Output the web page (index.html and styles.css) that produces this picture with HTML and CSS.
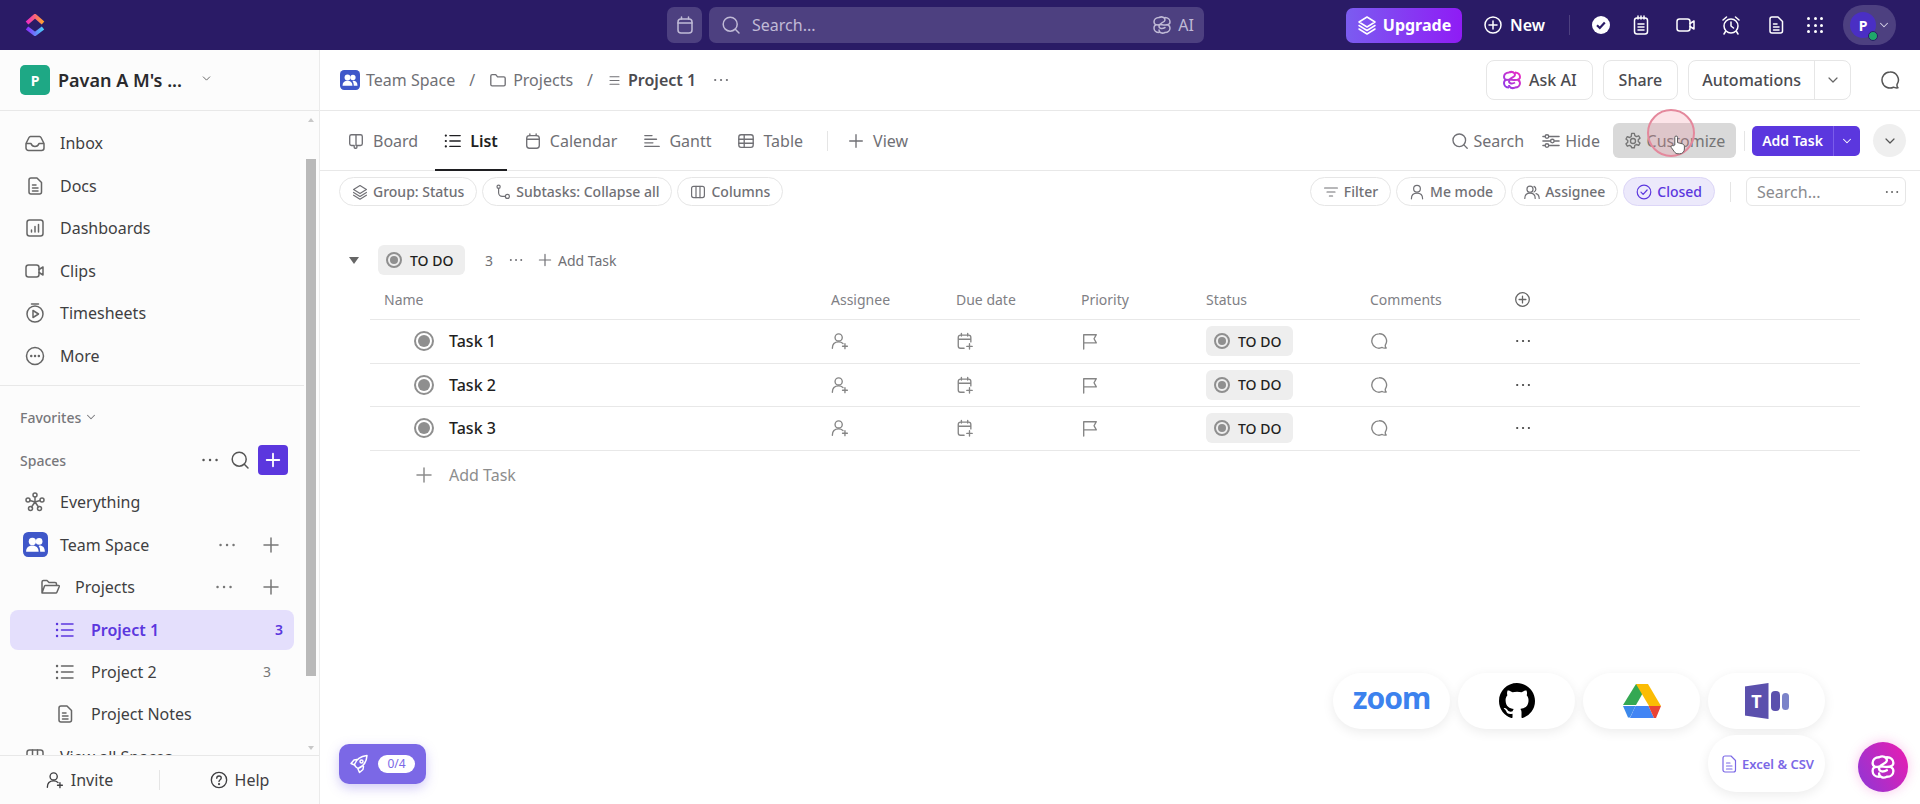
FILE: index.html
```html
<!DOCTYPE html>
<html lang="en">
<head>
  <meta charset="UTF-8" />
  <title>Project 1 – List</title>
  <link rel="stylesheet" href="styles.css">
</head>
<body>
  <svg class="sprite" aria-hidden="true">
    <defs>
      <linearGradient id="logoTop" x1="0" x2="1" y1="0" y2="0"><stop offset="0" stop-color="#f02bc0"/><stop offset="1" stop-color="#ffa12f"/></linearGradient>
      <linearGradient id="logoBottom" x1="0" x2="1" y1="0" y2="0"><stop offset="0" stop-color="#8930fd"/><stop offset="1" stop-color="#49ccf9"/></linearGradient>
      <linearGradient id="aiPink" x1="0" x2="1" y1="1" y2="0"><stop offset="0" stop-color="#8b3be8"/><stop offset="1" stop-color="#f02bc0"/></linearGradient>
    </defs>
    <symbol id="i-search" viewBox="0 0 20 20"><circle cx="9.2" cy="9.2" r="7"/><path d="M14.3 14.3l3.7 3.7"/></symbol>
    <symbol id="i-cal" viewBox="0 0 20 20"><rect x="3" y="4" width="14" height="14" rx="3"/><path d="M3 8h14M6.500 2v2M13.500 2v2"/></symbol>
    <symbol id="i-ai" viewBox="0 0 20 20"><path d="M7 2.500c3-1.500 6 0 6 2.500s-6 3-6 6 3.500 3 6 1.500M13 17.500c-3 1.500-6 0-6-2.500M13 2.500c3 0 5 2 5 4.500s-2 3-5 3-5.500-1-7 0M7 17.500c-3 0-5-2-5-4.500s1.500-3.500 4-3M7 2.500c-3 0-5 2-5 4.500 0 1.500 1 2.500 2 3M13 17.500c3 0 5-2 5-4.500 0-1.500-1-2.500-2-3"/></symbol>
    <symbol id="i-plus" viewBox="0 0 20 20"><path d="M10 3v14M3 10h14"/></symbol>
    <symbol id="i-plus-circle" viewBox="0 0 20 20"><circle cx="10" cy="10" r="8"/><path d="M10 6v8M6 10h8"/></symbol>
    <symbol id="i-chev" viewBox="0 0 20 20"><path d="M5 7.500l5 5 5-5"/></symbol>
    <symbol id="i-inbox" viewBox="0 0 20 20"><path d="M1 10.500V15a2.500 2.500 0 0 0 2.500 2.500h13A2.500 2.500 0 0 0 19 15v-4.500L16 4.500A2 2 0 0 0 14.500 3.500h-9A2 2 0 0 0 4 4.500zM1 10.500h5c.8 2.500 2 3 4 3s3.200-.5 4-3h5"/></symbol>
    <symbol id="i-doc" viewBox="0 0 20 20"><path d="M4 4a2 2 0 0 1 2-2h6l4.500 4.500V16a2 2 0 0 1-2 2H6a2 2 0 0 1-2-2zM7.500 9H11M7.500 12h5.500M7.500 15h5.500"/></symbol>
    <symbol id="i-dash" viewBox="0 0 20 20"><rect x="2" y="2" width="16" height="16" rx="2.500"/><path d="M6.500 14v-2M10 14V8.500M13.500 14V6.500"/></symbol>
    <symbol id="i-video" viewBox="0 0 20 20"><rect x="1" y="4" width="13" height="12" rx="2.500"/><path d="M14 8.500l4-2.500v8l-4-2.500"/></symbol>
    <symbol id="i-timer" viewBox="0 0 20 20"><circle cx="10" cy="11" r="8"/><path d="M6.500 1h7M8 7.500v7l5.500-3.500z"/></symbol>
    <symbol id="i-more" viewBox="0 0 20 20"><circle cx="10" cy="10" r="8.500"/><path class="dots" d="M6.200 10h.1M10 10h.1M13.800 10h.1"/></symbol>
    <symbol id="i-hub" viewBox="0 0 20 20"><circle cx="10" cy="3" r="2"/><circle cx="3" cy="8" r="2"/><circle cx="17" cy="8" r="2"/><circle cx="5.500" cy="16.500" r="2"/><circle cx="14.500" cy="16.500" r="2"/><path d="M10 5v5M5 8.500l5 1.500 5-1.500M6.500 15l3.500-5 3.500 5"/></symbol>
    <symbol id="i-folder-open" viewBox="0 0 20 20"><path d="M2 16V5a1.500 1.500 0 0 1 1.500-1.500h3.500l2 2h6a1.500 1.500 0 0 1 1.500 1.500v1.500M2 16l2.500-7a1 1 0 0 1 1-.5H18.500a.8.8 0 0 1 .8 1L17 15a1.500 1.500 0 0 1-1.500 1z"/></symbol>
    <symbol id="i-folder" viewBox="0 0 20 20"><path d="M2 5.500A1.500 1.500 0 0 1 3.500 4h4l2 2.500h7A1.500 1.500 0 0 1 18 8v7a1.500 1.500 0 0 1-1.500 1.500h-13A1.500 1.500 0 0 1 2 15z"/></symbol>
    <symbol id="i-list" viewBox="0 0 20 20"><path d="M6.500 4H18M6.500 10H18M6.500 16H18"/><path class="dots" d="M2 4h.1M2 10h.1M2 16h.1"/></symbol>
    <symbol id="i-lines" viewBox="0 0 20 20"><path d="M4 5h12M4 10h12M4 15h12"/></symbol>
    <symbol id="i-user-plus" viewBox="0 0 20 20"><circle cx="8.500" cy="6" r="4"/><path d="M1.500 18c0-4 2.500-7 7-7 2 0 3.500.6 4.800 1.800M15.500 13v5.500M12.800 15.800h5.400"/></symbol>
    <symbol id="i-help" viewBox="0 0 20 20"><circle cx="10" cy="10" r="8.500"/><path d="M7.500 8c0-1.500 1.200-2.500 2.500-2.500s2.500 1 2.500 2.300c0 2-2.500 2-2.500 4"/><path class="dots" d="M10 14.500h.1"/></symbol>
    <symbol id="i-dots" viewBox="0 0 20 20"><path class="dots" d="M3.500 10h.1M10 10h.1M16.500 10h.1"/></symbol>
    <symbol id="i-board" viewBox="0 0 20 20"><path d="M3 5a2 2 0 0 1 2-2h10a2 2 0 0 1 2 2v8a2 2 0 0 1-2 2h-4v2a1 1 0 0 1-1 1H9a1 1 0 0 1-1-1v-2H5 M3 5v8a2 2 0 0 0 2 2M10 3v12"/></symbol>
    <symbol id="i-gantt" viewBox="0 0 20 20"><path d="M2 4h8M2 8h13M2 12h9M2 16h16"/></symbol>
    <symbol id="i-table" viewBox="0 0 20 20"><rect x="2" y="3" width="16" height="14" rx="2.500"/><path d="M2 8h16M2 12.500h16M8 3v14"/></symbol>
    <symbol id="i-layers" viewBox="0 0 20 20"><path d="M10 2l8 5-8 5-8-5zM2 10.500l8 5 8-5M2 14l8 5 8-5"/></symbol>
    <symbol id="i-subtask" viewBox="0 0 20 20"><circle cx="4.500" cy="3.500" r="2"/><circle cx="15.500" cy="15.500" r="2.500"/><path d="M4.500 5.500V11a4.500 4.500 0 0 0 4.500 4.500h4"/></symbol>
    <symbol id="i-columns" viewBox="0 0 20 20"><rect x="2" y="3" width="16" height="14" rx="2.500"/><path d="M7.500 3v14M12.500 3v14"/></symbol>
    <symbol id="i-sliders" viewBox="0 0 20 20"><path d="M8 5h11M1 5h2M14 10h5M1 10h8M8 15h11M1 15h2"/><circle cx="5.500" cy="5" r="2"/><circle cx="11.500" cy="10" r="2"/><circle cx="5.500" cy="15" r="2"/></symbol>
    <symbol id="i-gear" viewBox="0 0 20 20"><circle cx="10" cy="10" r="2.800"/><path d="M8.500 1.500h3l.5 2.600 1.800 1 2.500-.9 1.500 2.600-2 1.700v2l2 1.700-1.500 2.600-2.500-.9-1.800 1-.5 2.600h-3L8 15.900l-1.800-1-2.500.9-1.500-2.600 2-1.700v-2l-2-1.700 1.500-2.600 2.500.9 1.800-1z"/></symbol>
    <symbol id="i-filter" viewBox="0 0 20 20"><path d="M2 5h16M5 10h10M8 15h4"/></symbol>
    <symbol id="i-user" viewBox="0 0 20 20"><circle cx="10" cy="6" r="4.200"/><path d="M3 18.500c0-4.500 3-7 7-7s7 2.500 7 7"/></symbol>
    <symbol id="i-users" viewBox="0 0 20 20"><circle cx="7.500" cy="6.500" r="3.800"/><path d="M1 18c0-4 2.500-6.500 6.500-6.500S14 14 14 18M12.500 3a3.800 3.800 0 0 1 0 7M15 12c2.500.7 4 3 4 6"/></symbol>
    <symbol id="i-check-circle" viewBox="0 0 20 20"><circle cx="10" cy="10" r="8.500"/><path d="M6.200 10.200l2.700 2.700 5-5.400"/></symbol>
    <symbol id="i-comment" viewBox="0 0 20 20"><path d="M10 2a8 8 0 1 0 3.500 15.200c1 .6 2.800.8 4.500.6-.8-.9-1.200-2-1-3.300A8 8 0 0 0 10 2z"/></symbol>
    <symbol id="i-cal-plus" viewBox="0 0 20 20"><path d="M9 18H5a2.500 2.500 0 0 1-2.500-2.500V6A2.500 2.500 0 0 1 5 3.500h9A2.500 2.500 0 0 1 16.500 6v5M2.500 8h14M6 1.500v3M13 1.500v3M15 13v6M12 16h6"/></symbol>
    <symbol id="i-flag" viewBox="0 0 20 20"><path d="M3 19V3h14l-2.500 4.500L17 12H3"/></symbol>
    <symbol id="i-clipboard" viewBox="0 0 20 20"><rect x="3.500" y="3" width="13" height="16" rx="2.500"/><path d="M7 1v3M10 1v3M13 1v3M7 9h6M7 12h6M7 15h6"/></symbol>
    <symbol id="i-alarm" viewBox="0 0 20 20"><circle cx="10" cy="11" r="7"/><path d="M10 7v4l2.500 2M2 5l3.500-3M18 5l-3.500-3M4.500 16.500L3 19M15.500 16.500L17 19"/></symbol>
    <symbol id="i-rocket" viewBox="0 0 20 20"><path d="M7 13l-1.500-2c1-4 4-8.500 12.500-9.500-.5 8-5 11.500-9 13zM5.500 11L2 9.500l3-3.500 3-.5M9 15l1.500 3.500 3.500-3 .5-3"/><circle cx="12.500" cy="7.500" r="1.500"/></symbol>
  </svg>

  <header class="topbar">
    <svg class="logo" viewBox="0 0 20 22">
      <path d="M2 9l8-7 8 7" fill="none" stroke="url(#logoTop)" stroke-width="4" />
      <path d="M2 14l8 6 8-6" fill="none" stroke="url(#logoBottom)" stroke-width="4" />
    </svg>
    <div class="top-center">
      <div class="top-cal"><svg class="ico"><use href="#i-cal"/></svg></div>
      <div class="top-search">
        <svg class="ico"><use href="#i-search"/></svg>
        <span class="top-search-text">Search...</span>
        <svg class="ico"><use href="#i-ai"/></svg>
        <span>AI</span>
      </div>
    </div>
    <div class="top-right">
      <button class="upgrade"><svg class="ico"><use href="#i-layers"/></svg>Upgrade</button>
      <div class="top-new"><svg class="ico"><use href="#i-plus-circle"/></svg>New</div>
      <span class="top-div"></span>
      <svg class="check-fill" viewBox="0 0 20 20"><circle cx="10" cy="10" r="9" fill="#fff"/><path d="M6 10.300l2.800 2.700 5-5.500" fill="none" stroke="#2a1b66" stroke-width="2.200"/></svg>
      <svg class="ico top-ico"><use href="#i-clipboard"/></svg>
      <svg class="ico top-ico"><use href="#i-video"/></svg>
      <svg class="ico top-ico"><use href="#i-alarm"/></svg>
      <svg class="ico top-ico"><use href="#i-doc"/></svg>
      <div class="apps"><i></i><i></i><i></i><i></i><i></i><i></i><i></i><i></i><i></i></div>
      <div class="me">
        <span class="avatar">P<i class="online"></i></span>
        <svg class="ico"><use href="#i-chev"/></svg>
      </div>
    </div>
  </header>

  <div class="app">
    <aside class="sidebar">
      <div class="workspace">
        <span class="ws-badge">P</span>
        <span class="ws-name">Pavan A M's ...</span>
        <svg class="ico ws-chev"><use href="#i-chev"/></svg>
      </div>

      <div class="side-scroll">
        <nav class="side-nav">
          <a class="side-row"><svg class="ico"><use href="#i-inbox"/></svg>Inbox</a>
          <a class="side-row"><svg class="ico"><use href="#i-doc"/></svg>Docs</a>
          <a class="side-row"><svg class="ico"><use href="#i-dash"/></svg>Dashboards</a>
          <a class="side-row"><svg class="ico"><use href="#i-video"/></svg>Clips</a>
          <a class="side-row"><svg class="ico"><use href="#i-timer"/></svg>Timesheets</a>
          <a class="side-row"><svg class="ico"><use href="#i-more"/></svg>More</a>
        </nav>

        <div class="side-label fav">Favorites <svg class="ico"><use href="#i-chev"/></svg></div>
        <div class="side-label spaces">
          <span class="grow">Spaces</span>
          <svg class="ico act"><use href="#i-dots"/></svg>
          <svg class="ico act"><use href="#i-search"/></svg>
          <span class="add-space"><svg class="ico"><use href="#i-plus"/></svg></span>
        </div>

        <a class="side-row"><svg class="ico"><use href="#i-hub"/></svg>Everything</a>
        <a class="side-row team">
          <svg class="team-ico" viewBox="0 0 24 24"><use href="#team-glyph"/><rect width="24" height="24" rx="5" fill="#3f57c9"/><circle cx="9" cy="9" r="3.500" fill="#fff"/><circle cx="15.500" cy="9" r="3.200" fill="#fff"/><path d="M3 19c0-4 2.500-6 6-6s6 2 6 6zM16 13c3 0 5 2 5 6h-4.500c0-2.500-.5-4.500-1.500-5.500z" fill="#fff"/></svg>
          <span class="grow">Team Space</span>
          <svg class="ico act"><use href="#i-dots"/></svg>
          <svg class="ico act"><use href="#i-plus"/></svg>
        </a>
        <a class="side-row folder">
          <svg class="ico"><use href="#i-folder-open"/></svg>
          <span class="grow">Projects</span>
          <svg class="ico act"><use href="#i-dots"/></svg>
          <svg class="ico act"><use href="#i-plus"/></svg>
        </a>
        <a class="side-row sub current">
          <svg class="ico"><use href="#i-list"/></svg>
          <span class="grow">Project 1</span>
          <span class="count">3</span>
        </a>
        <a class="side-row sub">
          <svg class="ico"><use href="#i-list"/></svg>
          <span class="grow">Project 2</span>
          <span class="count">3</span>
        </a>
        <a class="side-row sub"><svg class="ico"><use href="#i-doc"/></svg>Project Notes</a>
        <a class="side-row"><svg class="ico"><use href="#i-columns"/></svg>View all Spaces</a>

        <span class="scroll-up"></span>
        <span class="scroll-thumb"></span>
        <span class="scroll-down"></span>
      </div>

      <div class="side-foot">
        <a class="foot-btn"><svg class="ico"><use href="#i-user-plus"/></svg>Invite</a>
        <span class="foot-div"></span>
        <a class="foot-btn"><svg class="ico"><use href="#i-help"/></svg>Help</a>
      </div>
    </aside>

    <main class="content">
      <div class="crumbs">
        <svg class="crumb-team" viewBox="0 0 24 24"><rect width="24" height="24" rx="5" fill="#3f57c9"/><circle cx="9" cy="9" r="3.500" fill="#fff"/><circle cx="15.500" cy="9" r="3.200" fill="#fff"/><path d="M3 19c0-4 2.500-6 6-6s6 2 6 6zM16 13c3 0 5 2 5 6h-4.500c0-2.500-.5-4.500-1.500-5.500z" fill="#fff"/></svg>
        <span>Team Space</span>
        <span class="slash">/</span>
        <svg class="ico"><use href="#i-folder"/></svg>
        <span>Projects</span>
        <span class="slash">/</span>
        <svg class="ico small"><use href="#i-lines"/></svg>
        <strong>Project 1</strong>
        <svg class="ico crumb-dots"><use href="#i-dots"/></svg>
        <div class="crumb-actions">
          <button class="outline"><svg class="ai-color" viewBox="0 0 20 20"><use href="#i-ai"/></svg>Ask AI</button>
          <button class="outline">Share</button>
          <div class="outline auto"><span>Automations</span><span class="auto-chev"><svg class="ico"><use href="#i-chev"/></svg></span></div>
          <svg class="ico chat"><use href="#i-comment"/></svg>
        </div>
      </div>

      <div class="tabs">
        <a class="tab"><svg class="ico"><use href="#i-board"/></svg>Board</a>
        <a class="tab active"><svg class="ico"><use href="#i-list"/></svg>List</a>
        <a class="tab"><svg class="ico"><use href="#i-cal"/></svg>Calendar</a>
        <a class="tab"><svg class="ico"><use href="#i-gantt"/></svg>Gantt</a>
        <a class="tab"><svg class="ico"><use href="#i-table"/></svg>Table</a>
        <span class="tab-div"></span>
        <a class="tab"><svg class="ico"><use href="#i-plus"/></svg>View</a>
        <div class="tab-tools">
          <a class="tool"><svg class="ico"><use href="#i-search"/></svg>Search</a>
          <a class="tool"><svg class="ico"><use href="#i-sliders"/></svg>Hide</a>
          <a class="tool hover"><svg class="ico"><use href="#i-gear"/></svg>Customize</a>
          <span class="tool-div"></span>
          <div class="add-task"><span>Add Task</span><span class="add-chev"><svg class="ico"><use href="#i-chev"/></svg></span></div>
          <span class="round-chev"><svg class="ico"><use href="#i-chev"/></svg></span>
        </div>
      </div>

      <div class="filters">
        <a class="pill"><svg class="ico"><use href="#i-layers"/></svg>Group: Status</a>
        <a class="pill"><svg class="ico"><use href="#i-subtask"/></svg>Subtasks: Collapse all</a>
        <a class="pill"><svg class="ico"><use href="#i-columns"/></svg>Columns</a>
        <div class="filter-right">
          <a class="pill"><svg class="ico"><use href="#i-filter"/></svg>Filter</a>
          <a class="pill"><svg class="ico"><use href="#i-user"/></svg>Me mode</a>
          <a class="pill"><svg class="ico"><use href="#i-users"/></svg>Assignee</a>
          <a class="pill closed"><svg class="ico"><use href="#i-check-circle"/></svg>Closed</a>
          <span class="filter-div"></span>
          <div class="mini-search"><span>Search...</span><svg class="ico"><use href="#i-dots"/></svg></div>
        </div>
      </div>

      <section class="group">
        <div class="group-head">
          <span class="caret"></span>
          <span class="status-chip"><i class="status-dot small"></i>TO DO</span>
          <span class="group-count">3</span>
          <svg class="ico"><use href="#i-dots"/></svg>
          <span class="group-add"><svg class="ico"><use href="#i-plus"/></svg>Add Task</span>
        </div>

        <div class="task-grid task-header">
          <span class="col-name">Name</span>
          <span>Assignee</span>
          <span>Due date</span>
          <span>Priority</span>
          <span>Status</span>
          <span>Comments</span>
          <svg class="ico"><use href="#i-plus-circle"/></svg>
        </div>

        <div class="task-grid task-row">
          <span class="task-name"><i class="status-dot"></i>Task 1</span>
          <svg class="ico"><use href="#i-user-plus"/></svg>
          <svg class="ico"><use href="#i-cal-plus"/></svg>
          <svg class="ico"><use href="#i-flag"/></svg>
          <span class="status-chip"><i class="status-dot small"></i>TO DO</span>
          <svg class="ico"><use href="#i-comment"/></svg>
          <svg class="ico row-more"><use href="#i-dots"/></svg>
        </div>
        <div class="task-grid task-row">
          <span class="task-name"><i class="status-dot"></i>Task 2</span>
          <svg class="ico"><use href="#i-user-plus"/></svg>
          <svg class="ico"><use href="#i-cal-plus"/></svg>
          <svg class="ico"><use href="#i-flag"/></svg>
          <span class="status-chip"><i class="status-dot small"></i>TO DO</span>
          <svg class="ico"><use href="#i-comment"/></svg>
          <svg class="ico row-more"><use href="#i-dots"/></svg>
        </div>
        <div class="task-grid task-row">
          <span class="task-name"><i class="status-dot"></i>Task 3</span>
          <svg class="ico"><use href="#i-user-plus"/></svg>
          <svg class="ico"><use href="#i-cal-plus"/></svg>
          <svg class="ico"><use href="#i-flag"/></svg>
          <span class="status-chip"><i class="status-dot small"></i>TO DO</span>
          <svg class="ico"><use href="#i-comment"/></svg>
          <svg class="ico row-more"><use href="#i-dots"/></svg>
        </div>

        <div class="add-row"><svg class="ico"><use href="#i-plus"/></svg>Add Task</div>
      </section>
    </main>
  </div>

  <!-- things floating over the page -->
  <div class="click-ring"></div>
  <svg class="hand" viewBox="0 0 20 26"><path d="M6 13V3.500a1.700 1.700 0 0 1 3.400 0V10l6 1.500c1.500.4 2.600 1.500 2.600 3.500v3c0 3-2 6-6 6H10c-2 0-3.500-1-4.500-2.500L1.500 16c-.8-1.500 1-3 2.500-2z" fill="#fff" stroke="#555" stroke-width="1.200"/></svg>

  <div class="onboard">
    <svg class="ico"><use href="#i-rocket"/></svg>
    <span class="onboard-count">0/4</span>
  </div>

  <div class="integrations">
    <div class="int-card"><span class="zoom-word">zoom</span></div>
    <div class="int-card">
      <svg class="gh" viewBox="0 0 16 16"><path d="M8 0C3.580 0 0 3.580 0 8c0 3.540 2.290 6.530 5.470 7.590.4.070.55-.17.55-.38 0-.19-.01-.82-.01-1.490-2.010.37-2.530-.49-2.690-.94-.09-.23-.48-.94-.82-1.130-.28-.15-.68-.52-.01-.53.63-.01 1.080.58 1.230.82.72 1.210 1.870.87 2.330.66.07-.52.28-.87.51-1.070-1.780-.2-3.640-.89-3.640-3.950 0-.87.31-1.590.82-2.150-.08-.2-.36-1.020.08-2.120 0 0 .67-.21 2.200.82.64-.18 1.320-.27 2-.27s1.360.09 2 .27c1.530-1.040 2.200-.82 2.200-.82.44 1.100.16 1.920.08 2.120.51.56.82 1.270.82 2.150 0 3.070-1.870 3.750-3.650 3.950.29.25.54.73.54 1.480 0 1.070-.01 1.930-.01 2.200 0 .21.15.46.55.38A8.013 8.013 0 0 0 16 8c0-4.420-3.580-8-8-8z"/></svg>
    </div>
    <div class="int-card">
      <svg class="drive" viewBox="0 0 38 34">
        <path d="M13 0h12L13 21H0z" fill="#34a853" transform="translate(0 0)"/>
        <path d="M13 0h12l13 22H26z" fill="#fbbc04"/>
        <path d="M0 22h12.500L7 33.500H5z" fill="#1a73e8" opacity=".85"/>
        <path d="M12.500 22h13L31 34H7z" fill="#4285f4"/>
        <path d="M25.500 22H38l-5 12h-2z" fill="#ea4335"/>
      </svg>
    </div>
    <div class="int-card">
      <div class="teams">
        <span class="teams-door">T</span>
        <span class="teams-head big"></span>
        <span class="teams-head"></span>
      </div>
    </div>
    <div class="int-card excel">
      <svg class="ico"><use href="#i-doc"/></svg>Excel &amp; CSV
    </div>
  </div>

  <div class="ai-fab">
    <svg class="ico"><use href="#i-ai"/></svg>
  </div>
</body>
</html>
```

FILE: styles.css
```css
* {
  box-sizing: border-box;
}

html, body {
  height: 100%;
}

body {
  margin: 0;
  font-family: "Noto Sans", "Open Sans", sans-serif;
  font-size: 16px;
  color: #3f3f42;
  background: #fff;
  overflow: hidden;
  display: flex;
  flex-direction: column;
}

a {
  color: inherit;
}

button {
  font: inherit;
  color: inherit;
  background: none;
  border: none;
  padding: 0;
}

.sprite {
  position: absolute;
  width: 0;
  height: 0;
}

.ico {
  width: 20px;
  height: 20px;
  flex: none;
  fill: none;
  stroke: currentColor;
  stroke-width: 1.5;
  stroke-linecap: round;
  stroke-linejoin: round;
}

.dots {
  stroke-width: 2.4;
}

.grow {
  flex: 1;
}

/* top bar */
.topbar {
  height: 50px;
  flex: none;
  background: #2a1b66;
  color: #fff;
  display: flex;
  align-items: center;
  position: relative;
}

.logo {
  width: 20px;
  height: 22px;
  margin-left: 25px;
}

.top-center {
  margin-left: 622px;
  display: flex;
  gap: 7px;
}

.top-cal, .top-search {
  height: 36px;
  background: #4d4080;
  border-radius: 7px;
  color: #c0bad6;
  display: flex;
  align-items: center;
}

.top-cal {
  width: 35px;
  justify-content: center;
}

.top-search {
  width: 495px;
  padding: 0 10px 0 12px;
  gap: 6px;
}

.top-search-text {
  flex: 1;
  margin-left: 5px;
}

.top-right {
  margin-left: 142px;
  flex: 1;
  display: flex;
  align-items: center;
}

.upgrade {
  width: 116px;
  height: 35px;
  border-radius: 7px;
  background: linear-gradient(90deg, #7b5cf0, #8f1cf5);
  color: #fff;
  font-weight: 700;
  display: flex;
  align-items: center;
  justify-content: center;
  gap: 6px;
}

.top-new {
  margin-left: 21px;
  font-weight: 600;
  display: flex;
  align-items: center;
  gap: 7px;
}

.top-div {
  width: 1px;
  height: 20px;
  background: #4d4080;
  margin: 0 21px 0 24px;
}

.check-fill {
  width: 20px;
  height: 20px;
  margin-right: 20px;
}

.top-ico {
  margin-right: 25px;
}

.apps {
  width: 16px;
  display: grid;
  grid-template-columns: repeat(3, 3px);
  gap: 3.500px;
  margin-left: -4px;
}

.apps i {
  height: 3px;
  background: #fff;
  border-radius: 50%;
}

.me {
  margin-left: 20px;
  width: 53px;
  height: 40px;
  border-radius: 20px;
  background: #4d4080;
  display: flex;
  align-items: center;
  padding-left: 7px;
  color: #d8d4e8;
}

.me .ico {
  width: 14px;
  height: 14px;
  margin-left: 1px;
}

.avatar {
  width: 26px;
  height: 26px;
  border-radius: 50%;
  background: #4a2fc4;
  color: #fff;
  font-size: 14px;
  font-weight: 700;
  display: flex;
  align-items: center;
  justify-content: center;
  position: relative;
}

.online {
  position: absolute;
  right: -2px;
  bottom: -3px;
  width: 10px;
  height: 10px;
  border-radius: 50%;
  background: #1fa86a;
  border: 1.500px solid #2a1b66;
}

.app {
  flex: 1;
  min-height: 0;
  display: flex;
}

/* sidebar */
.sidebar {
  width: 320px;
  flex: none;
  background: #fcfcfc;
  border-right: 1px solid #ebebeb;
  display: flex;
  flex-direction: column;
}

.workspace {
  height: 61px;
  flex: none;
  border-bottom: 1px solid #e8e8e8;
  padding-left: 20px;
  display: flex;
  align-items: center;
}

.ws-badge {
  width: 30px;
  height: 30px;
  border-radius: 5px;
  background: #1ea885;
  color: #fff;
  font-size: 14px;
  font-weight: 700;
  display: flex;
  align-items: center;
  justify-content: center;
}

.ws-name {
  margin-left: 8px;
  font-size: 18px;
  font-weight: 600;
  color: #2a2a2d;
}

.ws-chev {
  width: 13px;
  height: 13px;
  margin-left: 18px;
  margin-top: -3px;
  color: #666;
}

.side-scroll {
  flex: 1;
  min-height: 0;
  overflow: hidden;
  position: relative;
  padding-top: 11px;
}

.side-nav {
  border-bottom: 1px solid #e8e8e8;
  margin-right: 15px;
  padding-bottom: 8px;
}

.side-row {
  height: 42.500px;
  display: flex;
  align-items: center;
  gap: 15px;
  padding-left: 25px;
  padding-right: 38px;
  color: #3f3f42;
}

.side-row .ico {
  color: #666;
}

.side-label {
  font-size: 14px;
  font-weight: 500;
  color: #77777b;
  display: flex;
  align-items: center;
  padding-left: 20px;
}

.side-label .ico {
  width: 14px;
  height: 14px;
}

.fav {
  height: 20px;
  margin-top: 21px;
  gap: 3px;
}

.spaces {
  height: 30px;
  margin-top: 18px;
  margin-bottom: 6px;
  padding-right: 31px;
}

.side-label .act {
  width: 20px;
  height: 20px;
  margin-right: 8px;
  color: #555;
}

.spaces .ico.act:first-of-type {
  margin-right: 10px;
}

.add-space {
  width: 30px;
  height: 30px;
  border-radius: 4px;
  background: #5b37de;
  color: #fff;
  display: flex;
  align-items: center;
  justify-content: center;
}

.add-space .ico {
  width: 18px;
  height: 18px;
  stroke-width: 2;
}

.team {
  padding-left: 23px;
  gap: 12px;
}

.team-ico {
  width: 25px;
  height: 25px;
  flex: none;
}

.side-row .act {
  margin-left: 12px;
  color: #777;
}

.folder {
  padding-left: 40px;
}

.sub {
  padding-left: 55px;
  gap: 16px;
}

.current {
  height: 40px;
  margin: 1px 25px 1px 10px;
  padding-left: 45px;
  padding-right: 11px;
  background: #e4dffc;
  border-radius: 8px;
  color: #5b37de;
  font-weight: 600;
}

.current .ico {
  color: #5b37de;
}

.count {
  font-size: 14px;
  color: #777;
}

.current .count {
  color: #5b37de;
}

.sub:not(.current) {
  padding-right: 48px;
}

.scroll-thumb {
  position: absolute;
  left: 306px;
  top: 48px;
  width: 10px;
  height: 517px;
  background: #b9b9b9;
}

.scroll-up, .scroll-down {
  position: absolute;
  left: 308px;
  width: 0;
  height: 0;
  border-left: 3px solid transparent;
  border-right: 3px solid transparent;
}

.scroll-up {
  top: 7px;
  border-bottom: 4px solid #c8c8c8;
}

.scroll-down {
  bottom: 5px;
  border-top: 4px solid #c8c8c8;
}

.side-foot {
  height: 49px;
  flex: none;
  border-top: 1px solid #e8e8e8;
  background: #fcfcfc;
  display: flex;
  align-items: center;
  position: relative;
}

.foot-btn {
  flex: 1;
  display: flex;
  align-items: center;
  justify-content: center;
  gap: 7px;
}

.foot-btn .ico {
  width: 18px;
  height: 18px;
}

.foot-div {
  width: 1px;
  height: 20px;
  background: #e5e5e5;
}

/* main column */
.content {
  flex: 1;
  min-width: 0;
  position: relative;
}

.crumbs {
  height: 61px;
  border-bottom: 1px solid #e8e8e8;
  padding: 0 20px 0 20px;
  display: flex;
  align-items: center;
  gap: 6px;
  color: #707075;
}

.crumb-team {
  width: 20px;
  height: 20px;
}

.crumbs strong {
  font-weight: 600;
  color: #4b4b50;
}

.crumbs .ico {
  width: 18px;
  height: 18px;
}

.crumbs .small {
  width: 15px;
  height: 15px;
}

.slash {
  margin: 0 8px;
}

.crumb-dots {
  margin-left: 10px;
}

.crumb-actions {
  margin-left: auto;
  display: flex;
  align-items: center;
  gap: 10px;
}

.outline {
  height: 40px;
  border: 1px solid #e6e6e6;
  border-radius: 8px;
  background: #fff;
  color: #4b4b50;
  font-weight: 500;
  display: flex;
  align-items: center;
  justify-content: center;
  padding: 0 15px;
}

.ai-color {
  width: 20px;
  height: 20px;
  fill: none;
  stroke: url(#aiPink);
  stroke-width: 2;
  margin-right: 7px;
}

.auto {
  padding: 0;
}

.auto > span:first-child {
  padding: 0 13px;
}

.auto-chev {
  width: 36px;
  height: 100%;
  border-left: 1px solid #e6e6e6;
  display: flex;
  align-items: center;
  justify-content: center;
  color: #666;
}

.auto-chev .ico {
  width: 16px;
  height: 16px;
}

.crumbs .chat {
  margin-left: 19px;
  width: 20px;
  height: 20px;
  color: #555;
}

.tabs {
  height: 60px;
  border-bottom: 1px solid #e8e8e8;
  padding-left: 18px;
  display: flex;
  align-items: center;
  color: #707075;
}

.tab {
  height: 100%;
  display: flex;
  align-items: center;
  gap: 8px;
  padding: 0 9px;
  margin-right: 8px;
  position: relative;
}

.tab .ico {
  width: 18px;
  height: 18px;
}

.tab.active {
  color: #1f1f22;
  font-weight: 600;
}

.tab.active::after {
  content: "";
  position: absolute;
  left: 0;
  right: 0;
  bottom: -1px;
  height: 2px;
  background: #1f1f22;
}

.tab-div {
  width: 1px;
  height: 20px;
  background: #e5e5e5;
  margin: 0 10px 0 7px;
}

.tab-tools {
  margin-left: auto;
  padding-right: 14px;
  display: flex;
  align-items: center;
}

.tool {
  display: flex;
  align-items: center;
  gap: 5px;
  margin-right: 18px;
}

.tool .ico {
  width: 18px;
  height: 18px;
}

.tool.hover {
  width: 123px;
  height: 35px;
  margin-right: 8px;
  margin-left: -5px;
  justify-content: center;
  border-radius: 6px;
  background: #d9d9d9;
  color: #757575;
}

.tool-div {
  width: 1px;
  height: 20px;
  background: #e5e5e5;
  margin-right: 7px;
}

.add-task {
  width: 108px;
  height: 30px;
  border-radius: 5px;
  background: #5b37de;
  color: #fff;
  font-size: 14px;
  font-weight: 600;
  display: flex;
  align-items: center;
}

.add-task > span:first-child {
  width: 81px;
  text-align: center;
}

.add-chev {
  flex: 1;
  height: 100%;
  border-left: 1px solid #7a5cea;
  display: flex;
  align-items: center;
  justify-content: center;
}

.add-chev .ico {
  width: 14px;
  height: 14px;
}

.round-chev {
  width: 33px;
  height: 33px;
  margin-left: 13px;
  border-radius: 50%;
  background: #efefef;
  color: #555;
  display: flex;
  align-items: center;
  justify-content: center;
}

.round-chev .ico {
  width: 16px;
  height: 16px;
}

.filters {
  height: 50px;
  padding: 0 14px 9px 19px;
  display: flex;
  align-items: center;
  gap: 5px;
}

.pill {
  height: 29px;
  padding: 0 12px;
  border: 1px solid #e6e6e6;
  border-radius: 15px;
  background: #fff;
  color: #707075;
  font-size: 14px;
  font-weight: 500;
  display: flex;
  align-items: center;
  gap: 5px;
}

.pill .ico {
  width: 16px;
  height: 16px;
}

.filter-right {
  margin-left: auto;
  display: flex;
  align-items: center;
  gap: 5px;
}

.closed {
  background: #ece9fb;
  border-color: #dcd6f7;
  color: #5b37de;
}

.filter-div {
  width: 1px;
  height: 20px;
  background: #e5e5e5;
  margin: 0 10px;
}

.mini-search {
  width: 160px;
  height: 29px;
  border: 1px solid #e6e6e6;
  border-radius: 6px;
  padding: 0 5px 0 10px;
  color: #8a8a8e;
  display: flex;
  align-items: center;
  justify-content: space-between;
}

.mini-search .ico {
  width: 16px;
  height: 16px;
  color: #666;
}

/* task table */
.group {
  padding: 24px 60px 0 50px;
}

.group-head {
  height: 30px;
  display: flex;
  align-items: center;
  color: #707075;
  font-size: 14px;
}

.caret {
  width: 0;
  height: 0;
  border-left: 5.500px solid transparent;
  border-right: 5.500px solid transparent;
  border-top: 7px solid #666;
  margin-left: -21px;
  margin-right: 19px;
}

.status-chip {
  width: 87px;
  height: 30px;
  border-radius: 6px;
  background: #eeeeee;
  color: #1f1f22;
  font-size: 14px;
  font-weight: 500;
  padding-left: 8px;
  display: flex;
  align-items: center;
  gap: 8px;
}

.group-count {
  margin-left: 20px;
}

.group-head .ico {
  width: 16px;
  height: 16px;
  margin-left: 15px;
}

.group-add {
  display: flex;
  align-items: center;
  gap: 5px;
  margin-left: -2px;
}

.status-dot {
  display: block;
  width: 20px;
  height: 20px;
  flex: none;
  border: 2px solid #8f8f8f;
  border-radius: 50%;
  padding: 2px;
  background: #8f8f8f;
  background-clip: content-box;
}

.status-dot.small {
  width: 16px;
  height: 16px;
}

.task-grid {
  display: grid;
  grid-template-columns: 461px 125px 125px 125px 164px 144px 16px;
  align-items: center;
}

.task-header {
  height: 45px;
  margin-top: 0;
  padding-top: 5px;
  border-bottom: 1px solid #e8e8e8;
  color: #808085;
  font-size: 14px;
}

.task-header .ico {
  width: 17px;
  height: 17px;
  color: #666;
}

.col-name {
  padding-left: 14px;
}

.task-row {
  height: 43.600px;
  border-bottom: 1px solid #e8e8e8;
  color: #858585;
}

.task-row .ico {
  width: 18px;
  height: 18px;
}

.task-row .row-more {
  color: #444;
}

.task-name {
  padding-left: 44px;
  color: #1f1f22;
  font-weight: 500;
  display: flex;
  align-items: center;
  gap: 15px;
}

.add-row {
  height: 48px;
  padding-left: 44px;
  color: #8d8d8d;
  display: flex;
  align-items: center;
  gap: 15px;
}

/* overlays */
.click-ring {
  position: absolute;
  left: 1647px;
  top: 109px;
  width: 48px;
  height: 48px;
  border-radius: 50%;
  border: 2px solid #e4889c;
  background: rgba(240, 130, 150, 0.22);
}

.hand {
  position: absolute;
  left: 1670px;
  top: 134px;
  width: 16px;
  height: 22px;
}

.onboard {
  position: absolute;
  left: 339px;
  top: 744px;
  width: 87px;
  height: 40px;
  border-radius: 10px;
  background: #7b68e6;
  box-shadow: 0 4px 12px rgba(123, 104, 230, 0.35);
  color: #fff;
  display: flex;
  align-items: center;
  gap: 9px;
  padding-left: 10px;
}

.onboard-count {
  width: 37px;
  height: 18px;
  border-radius: 9px;
  background: #fff;
  color: #7b68e6;
  font-size: 12px;
  text-align: center;
  line-height: 18px;
}

.integrations {
  position: absolute;
  left: 1333px;
  top: 673px;
  display: grid;
  grid-template-columns: repeat(4, 117px);
  gap: 6px 8px;
}

.int-card {
  height: 56px;
  border-radius: 28px;
  background: #fff;
  box-shadow: 0 3px 12px rgba(0, 0, 0, 0.08);
  display: flex;
  align-items: center;
  justify-content: center;
}

.zoom-word {
  font-size: 30px;
  line-height: 1;
  font-weight: 700;
  letter-spacing: -1px;
  color: #3c82ee;
  margin-top: -6px;
}

.gh {
  width: 36px;
  height: 36px;
  fill: #000;
}

.drive {
  width: 38px;
  height: 34px;
}

.teams {
  display: flex;
  align-items: center;
  gap: 1px;
  position: relative;
}

.teams-door {
  width: 24px;
  height: 36px;
  background: #5b50ad;
  clip-path: polygon(0 10%, 100% 0, 100% 100%, 0 90%);
  color: #fff;
  font-size: 18px;
  font-weight: 700;
  display: flex;
  align-items: center;
  justify-content: center;
}

.teams-head {
  width: 7px;
  height: 17px;
  border-radius: 4px;
  background: #7b83c9;
  margin-left: 1px;
}

.teams-head.big {
  width: 9px;
  height: 20px;
  background: #5b50ad;
}

.excel {
  grid-column: 4;
  height: 57px;
  color: #7b68e6;
  font-size: 13px;
  font-weight: 600;
  gap: 3px;
}

.excel .ico {
  width: 20px;
  height: 24px;
  stroke-width: 1.200;
}

.ai-fab {
  position: absolute;
  left: 1858px;
  top: 742px;
  width: 50px;
  height: 50px;
  border-radius: 50%;
  background: linear-gradient(60deg, #8d37d6, #ec1cb0);
  box-shadow: 0 0 12px rgba(236, 28, 176, 0.25);
  color: #fff;
  display: flex;
  align-items: center;
  justify-content: center;
}

.ai-fab .ico {
  width: 26px;
  height: 26px;
  stroke-width: 1.800;
}
```
